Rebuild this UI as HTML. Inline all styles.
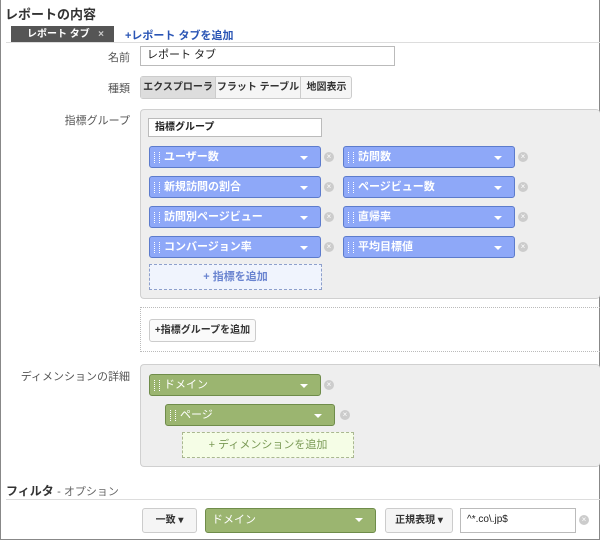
<!DOCTYPE html>
<html><head><meta charset="utf-8"><style>
*{box-sizing:border-box;margin:0;padding:0;white-space:nowrap}
body{width:600px;height:540px;background:#fff;font-family:"Liberation Sans","Noto Sans CJK JP",sans-serif;font-size:11px;color:#333;position:relative;overflow:hidden}
.a{position:absolute}
.frame{left:0;top:0;width:600px;height:540px;border:1px solid #888;border-top:none}
.lbl{text-align:right;width:130px;left:0;color:#555;font-size:11px}
.inp{border:1px solid #bbb;background:#fff;padding-left:6px;line-height:17px;font-size:11px;color:#222}
.panel{background:#eee;border:1px solid #d0d0d0;border-radius:4px;border-right:none}
.pill{height:22px;border-radius:3px;color:#fff;font-size:11px;font-weight:bold;line-height:20px;padding-left:14px}
.pill:before{content:"";position:absolute;left:4px;top:5px;width:4px;height:11px;border-left:1px dotted #fff;border-right:1px dotted #fff}
.pill:after,.dd:after{content:"";position:absolute;right:12px;top:9px;border-left:4px solid transparent;border-right:4px solid transparent;border-top:4px solid #fff}
.b{background:#8ea8f8;border:1px solid #5c7bcc}
.g{background:#9bb570;border:1px solid #6f8c4a}
.x{width:10px;height:10px;border-radius:50%;background:#ccc;color:#fff;font-size:8px;line-height:10px;text-align:center}
.btn{border:1px solid #ccc;border-radius:3px;background:#f5f5f5;font-size:10px;font-weight:bold;text-align:center;color:#333}
</style></head><body>
<div class="a frame"></div>
<div class="a" style="left:5px;top:4px;font-size:13px;font-weight:bold;color:#333">レポートの内容</div>
<div class="a" style="left:11px;top:26px;width:103px;height:17px;background:#555;color:#fff;font-size:10px;font-weight:bold;line-height:17px;padding-left:16px">レポート タブ&nbsp;&nbsp;&nbsp;<span style="color:#ccc">×</span></div>
<div class="a" style="left:125px;top:27px;color:#2a55b5;font-size:11px;font-weight:bold">+レポート タブを追加</div>
<div class="a" style="left:6px;top:42px;width:594px;height:1px;background:#ddd"></div>
<div class="a lbl" style="top:49px">名前</div>
<div class="a inp" style="left:140px;top:46px;width:255px;height:20px">レポート タブ</div>
<div class="a lbl" style="top:80px">種類</div>
<div class="a btn" style="left:140px;top:76px;width:212px;height:23px"></div>
<div class="a" style="left:141px;top:77px;width:74px;height:21px;background:#ddd;font-size:10px;font-weight:bold;line-height:21px;text-align:center">エクスプローラ</div>
<div class="a" style="left:215px;top:77px;width:1px;height:21px;background:#ccc"></div>
<div class="a" style="left:216px;top:77px;width:84px;line-height:21px;font-size:10px;font-weight:bold;text-align:center">フラット テーブル</div>
<div class="a" style="left:300px;top:77px;width:1px;height:21px;background:#ccc"></div>
<div class="a" style="left:301px;top:77px;width:51px;line-height:21px;font-size:10px;font-weight:bold;text-align:center">地図表示</div>
<div class="a lbl" style="top:112px">指標グループ</div>
<div class="a panel" style="left:140px;top:109px;width:460px;height:190px"></div>
<div class="a inp" style="left:148px;top:118px;width:174px;height:19px;font-weight:bold;font-size:10px">指標グループ</div>
<div class="a pill b" style="left:149px;top:146px;width:172px">ユーザー数</div><div class="a x" style="left:324px;top:152px">×</div>
<div class="a pill b" style="left:343px;top:146px;width:172px">訪問数</div><div class="a x" style="left:518px;top:152px">×</div>
<div class="a pill b" style="left:149px;top:176px;width:172px">新規訪問の割合</div><div class="a x" style="left:324px;top:182px">×</div>
<div class="a pill b" style="left:343px;top:176px;width:172px">ページビュー数</div><div class="a x" style="left:518px;top:182px">×</div>
<div class="a pill b" style="left:149px;top:206px;width:172px">訪問別ページビュー</div><div class="a x" style="left:324px;top:212px">×</div>
<div class="a pill b" style="left:343px;top:206px;width:172px">直帰率</div><div class="a x" style="left:518px;top:212px">×</div>
<div class="a pill b" style="left:149px;top:236px;width:172px">コンバージョン率</div><div class="a x" style="left:324px;top:242px">×</div>
<div class="a pill b" style="left:343px;top:236px;width:172px">平均目標値</div><div class="a x" style="left:518px;top:242px">×</div>
<div class="a" style="left:149px;top:264px;width:173px;height:26px;border:1px dashed #8ea0cc;background:#f0f4fd;color:#6a84d0;font-weight:bold;text-align:center;line-height:24px">+ 指標を追加</div>
<div class="a" style="left:140px;top:307px;width:460px;height:45px;border-top:1px dotted #bbb;border-left:1px dotted #bbb;border-bottom:1px dotted #bbb"></div>
<div class="a btn" style="left:149px;top:319px;width:107px;height:23px;line-height:21px;background:#fafafa">+指標グループを追加</div>
<div class="a lbl" style="top:368px">ディメンションの詳細</div>
<div class="a panel" style="left:140px;top:364px;width:460px;height:103px"></div>
<div class="a pill g" style="left:149px;top:374px;width:172px;font-weight:normal">ドメイン</div><div class="a x" style="left:324px;top:380px">×</div>
<div class="a pill g" style="left:165px;top:404px;width:170px;font-weight:normal">ページ</div><div class="a x" style="left:340px;top:410px">×</div>
<div class="a" style="left:182px;top:432px;width:172px;height:26px;border:1px dashed #aab890;background:#f5fde6;color:#7a9a55;text-align:center;line-height:24px">+ ディメンションを追加</div>
<div class="a" style="left:6px;top:482px;font-size:12px;font-weight:bold;color:#333">フィルタ <span style="font-weight:normal;font-size:11px;color:#666">- オプション</span></div>
<div class="a" style="left:6px;top:499px;width:594px;height:1px;background:#ddd"></div>
<div class="a btn" style="left:142px;top:508px;width:55px;height:25px;line-height:23px">一致 ▾</div>
<div class="a g dd" style="left:205px;top:508px;width:171px;height:25px;border-radius:3px;color:#fff;line-height:23px;padding-left:6px">ドメイン</div>
<div class="a btn" style="left:385px;top:508px;width:68px;height:25px;line-height:23px">正規表現 ▾</div>
<div class="a inp" style="left:460px;top:508px;width:116px;height:25px;line-height:22px;font-size:10px">^*.co\.jp$</div>
<div class="a x" style="left:579px;top:515px">×</div>
</body></html>
